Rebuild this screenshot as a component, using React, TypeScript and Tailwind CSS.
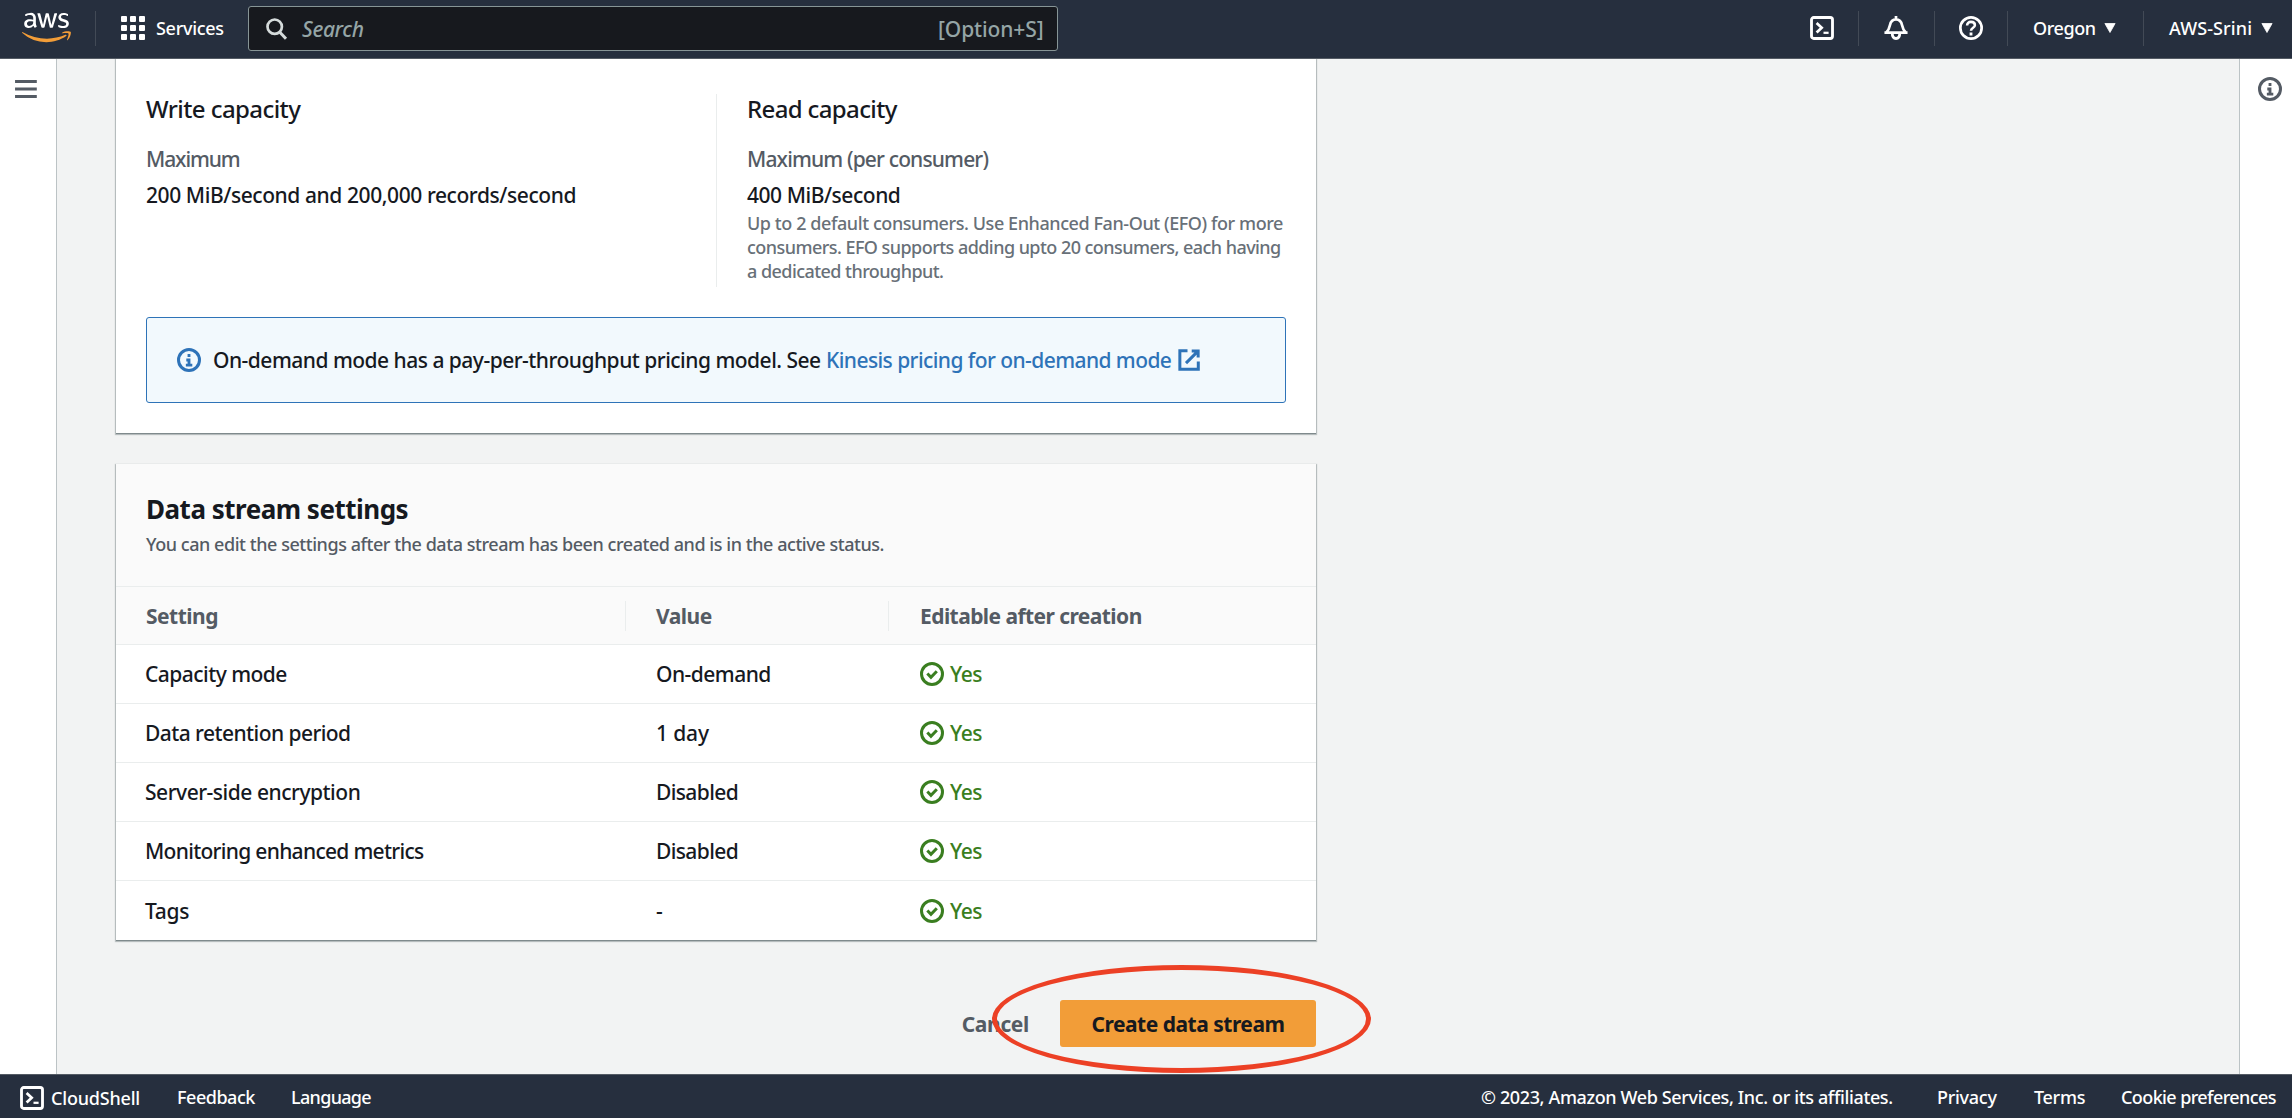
import type { ReactNode } from "react";
import { FaAws } from "react-icons/fa";

function Icon({ children, className = "" }: { children: ReactNode; className?: string }) {
  return (
    <svg
      viewBox="0 0 16 16"
      className={`size-6 shrink-0 ${className}`}
      fill="none"
      stroke="currentColor"
      strokeWidth="2"
      strokeLinejoin="round"
    >
      {children}
    </svg>
  );
}

const InfoIcon = ({ className }: { className?: string }) => (
  <Icon className={className}>
    <circle cx="8" cy="8" r="7" />
    <path d="M8 11.5V8H6.2M10.2 11.4H5.9M8 6V4" strokeWidth="1.9" strokeLinejoin="miter" />
  </Icon>
);

const CheckIcon = () => (
  <Icon>
    <circle cx="8" cy="8" r="7" />
    <path d="m4.9 7.7 2.4 2.5 3.9-4" strokeLinejoin="miter" />
  </Icon>
);

const ShellIcon = () => (
  <Icon>
    <rect x="1" y="1" width="14" height="14" rx="1.5" strokeWidth="1.9" />
    <path d="m4.4 4.6 3.4 3.2-3.4 3.2" strokeWidth="1.8" strokeLinejoin="miter" />
    <path d="M9 11.2h3.4" strokeWidth="1.5" />
  </Icon>
);

const BellIcon = () => (
  <Icon>
    <path d="M8 0v2M.3 11.1h15.4M1.5 11c1.8-1.7 2-2.6 2.5-5C4.5 3.5 6 2.2 8 2.2S11.5 3.5 12 6c.5 2.4.7 3.3 2.5 5" strokeWidth="1.8" />
    <path d="M5.5 11.5c0 2.2.9 3.500 2.500 3.500s2.500-1.300 2.500-3.500" strokeWidth="1.9" />
  </Icon>
);

const HelpIcon = () => (
  <Icon>
    <circle cx="8" cy="8" r="7.1" strokeWidth="1.8" />
    <path d="M5.4 6.4c0-1.6 1-2.5 2.6-2.5s2.6.9 2.6 2.2c0 1.7-2.6 1.7-2.6 3.7" strokeWidth="1.7" />
    <path d="M8 11v2" strokeWidth="1.9" />
  </Icon>
);

const Caret = () => (
  <svg viewBox="0 0 12 10" className="h-2.5 w-3" fill="currentColor">
    <path d="M.9.5h10.200L6 9.500z" stroke="currentColor" strokeWidth=".8" strokeLinejoin="round" />
  </svg>
);

const Divider = () => <div className="h-[35px] w-px bg-[#424a56]" />;

function Header() {
  return (
    <header className="flex h-[59px] shrink-0 items-start border-b border-[#545b64] bg-[#262f3e] text-lg leading-6 text-white">
      <div className="relative ml-[22px] h-[58px] w-[49px]">
        <div className="absolute top-0 left-0 h-[30px] overflow-hidden">
          <FaAws className="mt-[8px] h-[39px] w-[49px] text-white" />
        </div>
        <div className="absolute top-[30px] left-0 h-5 overflow-hidden">
          <FaAws className="-mt-[22px] h-[39px] w-[49px] text-[#f29d38]" />
        </div>
      </div>
      <div className="flex h-[56px] flex-1 items-center">
        <div className="ml-6">
          <Divider />
        </div>
        <div className="ml-[25px] grid grid-cols-3 gap-[3px]">
          {Array.from({ length: 9 }, (_, i) => (
            <span key={i} className="size-1.5 rounded-[1px] bg-white" />
          ))}
        </div>
        <span className="ml-[11px] w-[92px] tracking-[-0.3px]">Services</span>
        <div className="mt-px flex h-[45px] w-[810px] items-center rounded-[3px] border border-[#879596] bg-[#17191e] text-[21px] leading-[30px] text-[#95a5a6]">
          <svg viewBox="0 0 22 22" className="ml-[17px] size-[22px] text-[#d5dbdb]" fill="none" stroke="currentColor" strokeWidth="2.7">
            <circle cx="8.7" cy="8.7" r="7.2" />
            <path d="m13.6 14 6.4 6.800" strokeWidth="3" />
          </svg>
          <span className="ml-[14px] flex-1 italic tracking-[-0.35px]">Search</span>
          <span className="mr-[13px] w-[106px] tracking-[-0.11px]">[Option+S]</span>
        </div>
        <div className="flex-1" />
        <ShellIcon />
        <div className="ml-6"><Divider /></div>
        <div className="ml-[25px]"><BellIcon /></div>
        <div className="ml-[26px]"><Divider /></div>
        <div className="ml-6"><HelpIcon /></div>
        <div className="ml-6"><Divider /></div>
        <span className="ml-[25px] w-[71px] tracking-[-0.41px]">Oregon</span>
        <Caret />
        <div className="ml-[27px]"><Divider /></div>
        <span className="ml-[25px] w-[92px] tracking-[0.1px]">AWS-Srini</span>
        <div className="mr-[19px]"><Caret /></div>
      </div>
    </header>
  );
}

function CapacityCard() {
  return (
    <section className="h-[374px] bg-white px-[30px] pt-[35px] shadow-[0_1px_1px_1px_#8f9a9c80,0_1px_1px_0_#6f7a7c]">
      <div className="flex h-[193px] pt-px">
        <div className="w-[570px]">
          <h3 className="text-2xl leading-7 tracking-[-0.58px]">Write capacity</h3>
          <p className="mt-[21px] tracking-[-1.1px] text-[#545b64]">Maximum</p>
          <p className="mt-1.5 tracking-[-0.42px]">200 MiB/second and 200,000 records/second</p>
        </div>
        <div className="-mt-px flex-1 border-l border-[#eaeded] pt-px pl-[30px]">
          <h3 className="text-2xl leading-7 tracking-[-0.64px]">Read capacity</h3>
          <p className="mt-[21px] tracking-[-0.85px] text-[#545b64]">Maximum (per consumer)</p>
          <p className="mt-1.5 tracking-[-0.46px]">400 MiB/second</p>
          <p className="mt-px text-lg leading-6 whitespace-nowrap text-[#687078]">
            <span className="tracking-[-0.42px]">Up to 2 default consumers. Use Enhanced Fan-Out (EFO) for more</span>
            <br />
            <span className="tracking-[-0.55px]">consumers. EFO supports adding upto 20 consumers, each having</span>
            <br />
            <span className="tracking-[-0.55px]">a dedicated throughput.</span>
          </p>
        </div>
      </div>
      <div className="mt-[30px] flex h-[86px] items-center rounded-[3px] border border-[#2e73b8] bg-[#f2f9fd] pl-[30px] whitespace-nowrap">
        <InfoIcon className="text-[#2e73b8]" />
        <p className="ml-3 w-[613px] tracking-[-0.51px]">On-demand mode has a pay-per-throughput pricing model. See</p>
        <a className="w-[351px] tracking-[-0.57px] text-[#2e73b8]">Kinesis pricing for on-demand mode</a>
        <Icon className="text-[#2e73b8]">
          <path d="M9.8 2h4.300v4.400M6 10.100l8-8M14.200 9v5.200H1.900V1.900H7" strokeLinejoin="miter" />
        </Icon>
      </div>
    </section>
  );
}

const rows = [
  { name: "Capacity mode", track: "tracking-[-0.53px]", value: "On-demand", valueTrack: "tracking-[-0.52px]" },
  { name: "Data retention period", track: "tracking-[-0.56px]", value: "1 day", valueTrack: "tracking-[-0.15px]" },
  { name: "Server-side encryption", track: "tracking-[-0.48px]", value: "Disabled", valueTrack: "tracking-[-0.62px]" },
  { name: "Monitoring enhanced metrics", track: "tracking-[-0.7px]", value: "Disabled", valueTrack: "tracking-[-0.62px]" },
  { name: "Tags", track: "tracking-[-0.3px]", value: "-", valueTrack: "tracking-[0px]" },
];

function SettingsCard() {
  return (
    <section className="mt-[31px] h-[476px] bg-white shadow-[0_1px_1px_1px_#8f9a9c80,0_1px_1px_0_#6f7a7c]">
      <div className="h-[123px] border-b border-[#eaeded] bg-[#fafafa] px-[30px] pt-[27px]">
        <h2 className="text-[26px] leading-9 font-bold tracking-[-0.5px]">Data stream settings</h2>
        <p className="mt-[5px] text-lg leading-6 tracking-[-0.45px] text-[#545b64]">
          You can edit the settings after the data stream has been created and is in the active status.
        </p>
      </div>
      <div className="grid h-[58px] grid-cols-[510px_263px_1fr] items-center border-b border-[#eaeded] bg-[#fafafa] font-bold text-[#545b64]">
        <div className="border-r border-[#eaeded] pl-[30px] tracking-[-0.5px]">Setting</div>
        <div className="border-r border-[#eaeded] pl-[30px] tracking-[-0.5px]">Value</div>
        <div className="pl-[31px] tracking-[-0.57px]">Editable after creation</div>
      </div>
      {rows.map((row) => (
        <div
          key={row.name}
          className="grid h-[59px] grid-cols-[510px_263px_1fr] items-center border-b border-[#eaeded] last:border-b-0"
        >
          <div className={`pl-[29px] ${row.track}`}>{row.name}</div>
          <div className={`pl-[30px] ${row.valueTrack}`}>{row.value}</div>
          <div className="flex items-center gap-1.5 pl-[31px] text-[#3a7e20]">
            <CheckIcon />
            <span className="tracking-[-0.5px]">Yes</span>
          </div>
        </div>
      ))}
    </section>
  );
}

function Footer() {
  return (
    <footer className="flex h-11 shrink-0 items-center border-t border-[#545b64] bg-[#262f3e] pl-5 text-lg leading-6 whitespace-nowrap text-white">
      <div className="mt-[3px] flex items-center gap-[7px]">
        <ShellIcon />
        <span className="w-[126px] tracking-[-0.2px]">CloudShell</span>
      </div>
      <span className="w-[114px] tracking-[-0.48px]">Feedback</span>
      <span className="tracking-[-0.68px]">Language</span>
      <div className="flex-1" />
      <span className="w-[456px] tracking-[-0.37px]">© 2023, Amazon Web Services, Inc. or its affiliates.</span>
      <span className="w-[97px] tracking-[-0.28px]">Privacy</span>
      <span className="w-[87px] tracking-[-0.3px]">Terms</span>
      <span className="w-[171px] tracking-[-0.6px]">Cookie preferences</span>
    </footer>
  );
}

export default function App() {
  return (
    <div className="flex h-[1118px] w-[2292px] flex-col overflow-hidden bg-[#f2f3f3] font-['Noto_Sans',sans-serif] text-[21px] leading-[30px] font-medium text-[#16191f]">
      <Header />
      <div className="flex min-h-0 flex-1">
        <aside className="w-[57px] border-r border-[#bcc3c5] bg-white pt-[18px] pl-3.5">
          <Icon className="text-[#545b64]">
            <path d="M.7 3h14.500M.7 8h14.500M.7 13h14.500" />
          </Icon>
        </aside>
        <main className="min-w-0 flex-1 overflow-hidden pl-[59px]">
          <div className="w-[1200px]">
            <CapacityCard />
            <SettingsCard />
            <div className="relative mt-[60px] flex h-[47px] items-center justify-end font-bold">
              <button className="mr-[31px] tracking-[-0.34px] text-[#545b64]">Cancel</button>
              <button className="h-[47px] w-64 rounded-[3px] bg-[#f29d38] tracking-[-0.5px]">Create data stream</button>
              <div className="absolute top-[-35px] left-[876px] h-[108px] w-[379px] rounded-[50%] border-[5px] border-[#ec4025]" />
            </div>
          </div>
        </main>
        <aside className="w-[53px] border-l border-[#bcc3c5] bg-white pt-[18px] pl-[18px]">
          <InfoIcon className="text-[#545b64]" />
        </aside>
      </div>
      <Footer />
    </div>
  );
}
